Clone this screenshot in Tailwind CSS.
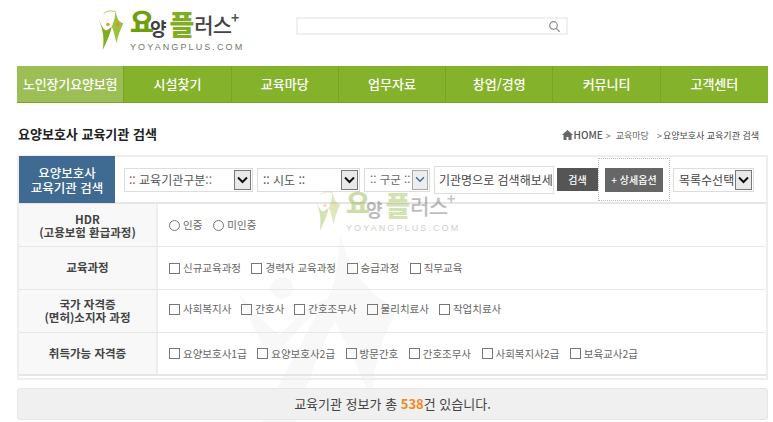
<!DOCTYPE html>
<html lang="ko">
<head>
<meta charset="utf-8">
<script src="https://cdn.jsdelivr.net/npm/@tailwindcss/browser@4"></script>
</head>
<body class="bg-white font-['Noto_Sans_CJK_KR','Noto_Sans',sans-serif] text-[#444] h-[422px] w-[773px] overflow-hidden">
<div class="relative w-[773px] h-[422px] overflow-hidden">
  <svg class="absolute left-0 top-0 pointer-events-none" width="773" height="422" viewBox="0 0 773 422" fill="#f8f8f8">
    <circle cx="282" cy="288" r="11"/>
    <path d="M238 292 C250 320 262 345 272 362 C285 345 300 325 320 308 C300 345 275 390 262 422 L296 422 C305 390 318 350 335 322 C350 350 365 385 372 400 C372 370 382 335 398 310 C380 300 350 280 340 232 C338 265 335 285 328 298 C310 305 295 318 280 335 C265 325 250 308 238 292Z"/>
  </svg>
  <header class="relative h-[66px] flex items-start pl-[97px]">
    <a class="flex items-start pt-[7px] w-[199px] shrink-0">
      <svg width="28" height="44" viewBox="0 0 85 135" class="shrink-0">
        <path d="M4 35 C12 55 20 70 27 72 C32 72 40 65 45 60 C40 85 30 105 17 132 C22 100 20 75 4 35Z" fill="#7fae22"/>
        <path d="M55 3 C58 25 62 45 80 50 C72 70 62 90 60 112 C55 95 52 75 45 60 C52 45 57 25 55 3Z" fill="#9cc13f"/>
        <path d="M20 20 C30 12 42 10 55 14" fill="none" stroke="#a9c96a" stroke-width="3"/>
        <circle cx="33" cy="53" r="5" fill="#f08a24"/><circle cx="63" cy="53" r="5" fill="#f08a24"/>
      </svg>
      <div class="ml-[5px] flex flex-col">
        <div class="h-[36px] flex items-start leading-none">
          <span class="text-[26px] font-black text-[#6f9f0f] mt-[1px]">요</span><span class="text-[18px] font-bold text-[#3f3f3f] mt-[12px] -ml-[4px]">양</span><span class="text-[27px] font-black text-[#7fae22] ml-[3px] mt-[3px]">플</span><span class="text-[21px] font-medium text-[#444] mt-[7px] tracking-[-1px]">러스</span><span class="text-[14px] font-bold text-[#555] mt-[3px]">+</span>
        </div>
        <div class="text-[9px] leading-none tracking-[2.1px] text-[#6b7a66] font-['Liberation_Sans']">YOYANGPLUS.COM</div>
      </div>
    </a>
    <div class="mt-[17px] w-[272px] h-[18px] border-2 border-[#f0f0f0] flex items-center justify-end pr-[5px]">
      <svg width="13" height="13" viewBox="0 0 13 13" fill="none" stroke="#8a8a8a" stroke-width="1.2"><circle cx="5.5" cy="5.5" r="3.8"/><path d="M8.4 8.4l3.4 3.4"/></svg>
    </div>
  </header>

  <nav class="relative mx-[17px] w-[751px] h-[37px] grid grid-cols-7 bg-[#84b22a] border-b border-[#78a524] text-white text-[13px] font-medium">
    <a class="flex items-center justify-center bg-[#9bbf54] border-r border-[#78a524] tracking-[-0.2px] whitespace-nowrap">노인장기요양보험</a>
    <a class="flex items-center justify-center border-r border-[#78a524]">시설찾기</a>
    <a class="flex items-center justify-center border-r border-[#78a524]">교육마당</a>
    <a class="flex items-center justify-center border-r border-[#78a524]">업무자료</a>
    <a class="flex items-center justify-center border-r border-[#78a524]">창업/경영</a>
    <a class="flex items-center justify-center border-r border-[#78a524]">커뮤니티</a>
    <a class="flex items-center justify-center">고객센터</a>
  </nav>

  <div class="relative mx-[18px] w-[741px] h-[52px] flex items-center justify-between pt-[8px]">
    <h1 class="text-[13px] font-bold text-[#222] leading-none">요양보호사 교육기관 검색</h1>
    <div class="flex items-center text-[9px] text-[#666] leading-none pt-[4px]">
      <svg width="11" height="10" viewBox="0 0 11 10" fill="#666"><path d="M5.5 0L0 5h1.5v5h3V7h2v3h3V5H11z"/></svg>
      <span class="text-[10px] font-medium text-[#555] ml-[1px]">HOME</span><span class="ml-[3px] mr-[5px]">&gt;</span><span>교육마당</span><span class="ml-[8px] mr-[1px]">&gt;</span><span class="text-[#444]">요양보호사 교육기관 검색</span>
    </div>
  </div>

  <section class="relative mx-[17px] w-[751px] h-[225px] border-2 border-[#eeeeee]">
    <div class="h-[47px] flex items-center border-b-2 border-[#e6e6e6] relative">
      <div class="w-[96px] h-[47px] bg-[#3f6a92] text-white text-[12.5px] font-medium leading-[15px] text-center flex items-center justify-center shrink-0">요양보호사<br>교육기관 검색</div>

      <div class="relative ml-[9px] w-[129px] h-[24px] border border-[#ddd] text-[12px] flex items-center pl-[4px] text-[#555] shrink-0"><span class="text-[#b45]">::</span>&nbsp;교육기관구분<span class="text-[#777]">::</span>
        <span class="absolute right-[1px] top-[1px] w-[17px] h-[20px] bg-[#e9e9e9] border border-[#777] flex items-center justify-center"><svg width="11" height="8" viewBox="0 0 11 8" fill="none" stroke="#111" stroke-width="2"><path d="M1 1.5l4.5 4.5 4.5-4.5"/></svg></span>
      </div>
      <div class="relative ml-[4px] w-[103px] h-[24px] border border-[#ddd] text-[12px] flex items-center pl-[5px] text-[#555] shrink-0">::&nbsp;시도&nbsp;::
        <span class="absolute right-[1px] top-[1px] w-[17px] h-[20px] bg-[#e9e9e9] border border-[#777] flex items-center justify-center"><svg width="11" height="8" viewBox="0 0 11 8" fill="none" stroke="#111" stroke-width="2"><path d="M1 1.5l4.5 4.5 4.5-4.5"/></svg></span>
      </div>
      <div class="relative ml-[4px] w-[66px] h-[24px] border border-[#ddd] text-[11.5px] flex items-center pl-[5px] text-[#666] shrink-0 whitespace-nowrap overflow-hidden">::&nbsp;구군&nbsp;::
        <span class="absolute right-[1px] top-[1px] w-[16px] h-[20px] bg-[#eeeeee] border border-[#aaa] flex items-center justify-center"><svg width="10" height="7" viewBox="0 0 11 8" fill="none" stroke="#3f6a92" stroke-width="1.6"><path d="M1 1.5l4.5 4.5 4.5-4.5"/></svg></span>
      </div>
      <div class="ml-[4px] w-[120px] h-[28px] border border-[#ddd] text-[12px] flex items-center pl-[4px] text-[#444] whitespace-nowrap overflow-hidden shrink-0">기관명으로 검색해보세요</div>
      <button class="ml-[3px] w-[41px] h-[23px] bg-[#555] text-white text-[10px] font-medium shrink-0">검색</button>
      <div class="w-[72px] h-[43px] border border-dotted border-[#bbb] flex items-center justify-center shrink-0">
        <button class="w-[58px] h-[24px] bg-[#666] text-white text-[10px] font-medium">+ 상세옵션</button>
      </div>
      <div class="relative ml-[3px] w-[81px] h-[24px] border border-[#ddd] text-[12px] flex items-center pl-[5px] text-[#444] shrink-0 whitespace-nowrap">목록수선택
        <span class="absolute right-[1px] top-[1px] w-[17px] h-[20px] bg-[#e9e9e9] border border-[#777] flex items-center justify-center"><svg width="11" height="8" viewBox="0 0 11 8" fill="none" stroke="#111" stroke-width="2"><path d="M1 1.5l4.5 4.5 4.5-4.5"/></svg></span>
      </div>
    </div>

    <div class="flex h-[43px] border-b border-[#e6e6e6]">
      <div class="w-[139px] bg-[#f8f8f8] border-r-2 border-[#eeeeee] text-[11.5px] font-bold leading-[13px] text-center flex items-center justify-center text-[#444] shrink-0 pt-[1px]"><span>HDR<br>(고용보험 환급과정)</span></div>
      <div class="flex items-center pl-[11px] text-[10.5px] text-[#666] gap-[11px]">
        <label class="flex items-center gap-[3px]"><span class="w-[11px] h-[11px] rounded-full border border-[#777]"></span>인증</label>
        <label class="flex items-center gap-[3px]"><span class="w-[11px] h-[11px] rounded-full border border-[#777]"></span>미인증</label>
      </div>
    </div>
    <div class="flex h-[43px] border-b border-[#e6e6e6]">
      <div class="w-[139px] bg-[#f8f8f8] border-r-2 border-[#eeeeee] text-[11.5px] font-bold flex items-center justify-center text-[#444] shrink-0">교육과정</div>
      <div class="flex items-center pl-[11px] text-[10.5px] text-[#666] gap-[10.5px] whitespace-nowrap">
        <label class="flex items-center gap-[3px]"><span class="w-[11px] h-[11px] border border-[#777]"></span>신규교육과정</label>
        <label class="flex items-center gap-[3px]"><span class="w-[11px] h-[11px] border border-[#777]"></span>경력자 교육과정</label>
        <label class="flex items-center gap-[3px]"><span class="w-[11px] h-[11px] border border-[#777]"></span>승급과정</label>
        <label class="flex items-center gap-[3px]"><span class="w-[11px] h-[11px] border border-[#777]"></span>직무교육</label>
      </div>
    </div>
    <div class="flex h-[43px] border-b border-[#e6e6e6]">
      <div class="w-[139px] bg-[#f8f8f8] border-r-2 border-[#eeeeee] text-[11.5px] font-bold leading-[13px] text-center flex items-center justify-center text-[#444] shrink-0"><span>국가 자격증<br>(면허)소지자 과정</span></div>
      <div class="flex items-center pl-[11px] text-[10.5px] text-[#666] gap-[10px] whitespace-nowrap pb-[4px]">
        <label class="flex items-center gap-[3px]"><span class="w-[11px] h-[11px] border border-[#777]"></span>사회복지사</label>
        <label class="flex items-center gap-[3px]"><span class="w-[11px] h-[11px] border border-[#777]"></span>간호사</label>
        <label class="flex items-center gap-[3px]"><span class="w-[11px] h-[11px] border border-[#777]"></span>간호조무사</label>
        <label class="flex items-center gap-[3px]"><span class="w-[11px] h-[11px] border border-[#777]"></span>물리치료사</label>
        <label class="flex items-center gap-[3px]"><span class="w-[11px] h-[11px] border border-[#777]"></span>작업치료사</label>
      </div>
    </div>
    <div class="flex h-[43px] border-b-2 border-[#e6e6e6]">
      <div class="w-[139px] bg-[#f8f8f8] border-r-2 border-[#eeeeee] text-[11.5px] font-bold flex items-center justify-center text-[#444] shrink-0">취득가능 자격증</div>
      <div class="flex items-center pl-[11px] text-[10.5px] text-[#666] gap-[10.5px] whitespace-nowrap">
        <label class="flex items-center gap-[3px]"><span class="w-[11px] h-[11px] border border-[#777]"></span>요양보호사1급</label>
        <label class="flex items-center gap-[3px]"><span class="w-[11px] h-[11px] border border-[#777]"></span>요양보호사2급</label>
        <label class="flex items-center gap-[3px]"><span class="w-[11px] h-[11px] border border-[#777]"></span>방문간호</label>
        <label class="flex items-center gap-[3px]"><span class="w-[11px] h-[11px] border border-[#777]"></span>간호조무사</label>
        <label class="flex items-center gap-[3px]"><span class="w-[11px] h-[11px] border border-[#777]"></span>사회복지사2급</label>
        <label class="flex items-center gap-[3px]"><span class="w-[11px] h-[11px] border border-[#777]"></span>보육교사2급</label>
      </div>
    </div>

    <div class="absolute left-[295px] top-[31px] flex items-start opacity-35 pointer-events-none">
      <svg width="28" height="44" viewBox="0 0 85 135" class="shrink-0">
        <path d="M4 35 C12 55 20 70 27 72 C32 72 40 65 45 60 C40 85 30 105 17 132 C22 100 20 75 4 35Z" fill="#7fae22"/>
        <path d="M55 3 C58 25 62 45 80 50 C72 70 62 90 60 112 C55 95 52 75 45 60 C52 45 57 25 55 3Z" fill="#9cc13f"/>
        <path d="M20 20 C30 12 42 10 55 14" fill="none" stroke="#a9c96a" stroke-width="3"/>
        <circle cx="33" cy="53" r="5" fill="#f08a24"/><circle cx="63" cy="53" r="5" fill="#f08a24"/>
      </svg>
      <div class="ml-[4px] flex flex-col">
        <div class="h-[36px] flex items-start leading-none">
          <span class="text-[26px] font-black text-[#6f9f0f] mt-[1px]">요</span><span class="text-[18px] font-bold text-[#3f3f3f] mt-[12px] -ml-[4px]">양</span><span class="text-[27px] font-black text-[#7fae22] ml-[3px] mt-[3px]">플</span><span class="text-[21px] font-medium text-[#444] mt-[7px] tracking-[-1px]">러스</span><span class="text-[14px] font-bold text-[#555] mt-[3px]">+</span>
        </div>
        <div class="text-[9px] leading-none tracking-[2.1px] text-[#6b7a66] font-['Liberation_Sans']">YOYANGPLUS.COM</div>
      </div>
    </div>
  </section>

  <div class="relative mx-[17px] mt-[8px] w-[751px] h-[32px] bg-[#f0f0f0] border border-[#e6e6e6] rounded-[3px] flex items-center justify-center text-[13px] text-[#444]">교육기관 정보가 총&nbsp;<b class="text-[#f58a1f] font-bold">538</b>건 있습니다.</div>
</div>
</body>
</html>
